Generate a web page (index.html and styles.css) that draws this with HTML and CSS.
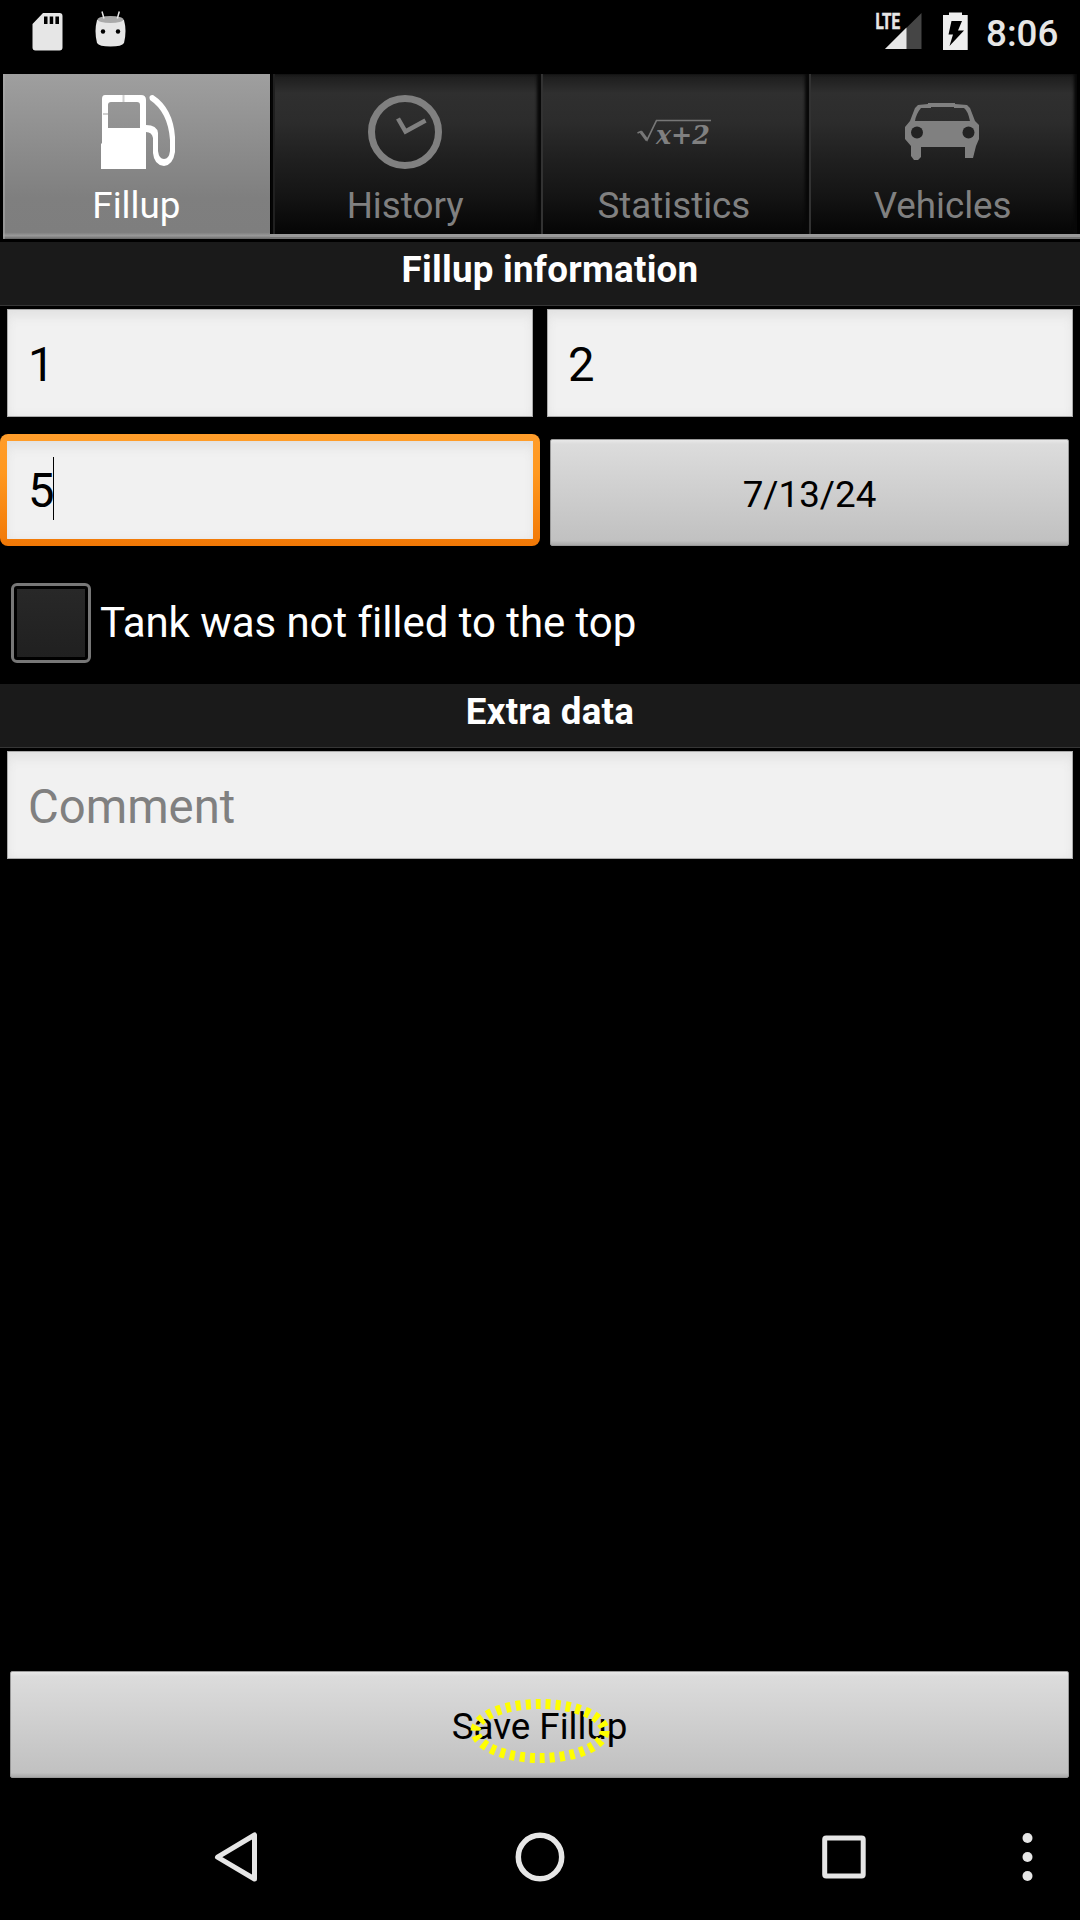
FILE: index.html
```html
<!DOCTYPE html>
<html lang="en">
<head>
<meta charset="utf-8">
<title>Fillup</title>
<link rel="stylesheet" href="styles.css">
</head>
<body>
<div class="screen">
  <header class="status">
    <svg class="status-left" width="140" height="74" viewBox="0 0 140 74">
      <path fill="#e6e6e6" fill-rule="evenodd" d="M43 13H59.500Q62.500 13 62.500 16V47.500Q62.500 50.500 59.500 50.500H35.500Q32.500 50.500 32.500 47.500V24ZM44 16.500V24H47.500V16.500ZM49.700 16.500V24H53.200V16.500ZM55.400 16.500V24H59V16.500Z"/>
      <path fill="#e6e6e6" d="M97 20Q110.500 15 124 20Q127 31 124 43Q122 46.500 110.500 46.500Q99 46.500 97 43Q94 31 97 20Z"/>
      <ellipse cx="110.500" cy="19.500" rx="13" ry="3.500" fill="#aaa"/>
      <path d="M102 11.500L104 18.500M119.300 11.500L117.300 18.500" stroke="#e6e6e6" stroke-width="1.500"/>
      <circle cx="103" cy="31.500" r="2.200"/><circle cx="118" cy="31.500" r="2.200"/>
    </svg>
    <div class="status-right">
      <svg width="100" height="74" viewBox="870 0 100 74">
        <path fill="#454545" d="M921.500 13V49H885Z"/>
        <path fill="#e6e6e6" d="M906.500 27.500V49H885Z"/>
        <text class="lte" x="875.500" y="29" textLength="24.500" lengthAdjust="spacingAndGlyphs">LTE</text>
        <path fill="#eee" d="M949 12.500H962V15H967.700V50H943V15H949Z"/>
        <path d="M951.500 21H962L958 30.500H964L949.500 46L953 34.500H948.500Z"/>
      </svg>
      <span class="clock">8:06</span>
    </div>
  </header>

  <nav class="tabs">
    <div class="tab active">
      <svg class="tab-icon" viewBox="0 0 84 84">
        <path fill="#fff" fill-rule="evenodd" d="M12 5H48Q53 5 53 10V35Q64 35 65 43V61Q66 69 71 69Q76 69 77 61V50Q75 22 57 10Q55 5 60 5Q80 18 82 47V62Q80 75 71 76Q61 75 60 63V48Q59 42 53 42V79H8V54L9 53V9Q9 5 12 5ZM18 12Q15 12 15 15V38H47V15Q47 12 44 12Z"/>
        <path d="M30.500 5V12M10 24H15" stroke="#d0d0d0" stroke-width="2"/>
      </svg>
      <span>Fillup</span>
    </div>
    <div class="tab">
      <svg class="tab-icon" viewBox="0 0 84 84" fill="none" stroke="#808080">
        <circle cx="42" cy="42" r="33.500" stroke-width="7"/>
        <path d="M35 28.500L42.500 41.500L62.500 30.500" stroke-width="4.500"/>
      </svg>
      <span>History</span>
    </div>
    <div class="tab">
      <svg class="tab-icon" viewBox="0 0 84 84">
        <path d="M5.500 43L9 41.500L15 50L24.500 30.500H79" fill="none" stroke="#777" stroke-width="1.700"/>
        <path d="M9 42L15 50" stroke="#777" stroke-width="3"/>
        <text class="formula" x="24" y="54" textLength="54" lengthAdjust="spacingAndGlyphs">x+2</text>
      </svg>
      <span>Statistics</span>
    </div>
    <div class="tab vehicles">
      <svg class="tab-icon" viewBox="0 0 84 84">
        <path fill="#808080" fill-rule="evenodd" d="M18 15L28 14V13H55V14L67 15L70 18L75 31L79 35V49L76 56L73 68H65V57H21V67L18 70H14L11 66V56L5 49V37L10 31L15 18ZM21 18Q16 24 15 31H70Q68 21 64 18H54V17H31V18Z"/>
        <circle cx="17" cy="42.500" r="6" fill="#222"/><circle cx="68.500" cy="42.500" r="6" fill="#222"/>
      </svg>
      <span>Vehicles</span>
    </div>
  </nav>
  <div class="tab-strip"></div>

  <main>
    <h2>Fillup information</h2>
    <div class="row">
      <div class="field">1</div>
      <div class="field">2</div>
    </div>
    <div class="row second">
      <div class="field focused">5<i class="caret"></i></div>
      <button class="date">7/13/24</button>
    </div>
    <div class="check-row">
      <span class="checkbox"><i></i></span>
      <span>Tank was not filled to the top</span>
    </div>
    <h2>Extra data</h2>
    <div class="row"><div class="field hint">Comment</div></div>
  </main>

  <footer>
    <button class="save">Save Fillup
      <svg class="touch" viewBox="0 0 144 72"><ellipse cx="72" cy="36" rx="64.500" ry="27" fill="none" stroke="#ff0" stroke-width="10" stroke-dasharray="5 5"/></svg>
    </button>
    <svg class="nav" viewBox="0 1778 1080 142" fill="none" stroke="#e6e6e6">
      <path d="M217.500 1857.200L254.500 1835V1879Z" stroke-width="5" stroke-linejoin="round"/>
      <circle cx="540" cy="1857" r="21.700" stroke-width="5.500"/>
      <rect x="824.700" y="1838" width="38.500" height="38" rx="1.500" stroke-width="5"/>
      <g fill="#e6e6e6" stroke="none"><circle cx="1027.500" cy="1838" r="5"/><circle cx="1027.500" cy="1857" r="5"/><circle cx="1027.500" cy="1876" r="5"/></g>
    </svg>
  </footer>
</div>
</body>
</html>
```
FILE: styles.css
```css
* { box-sizing: border-box; }

body {
  margin: 0;
  background: #000;
  color: #fff;
  font-family: Roboto, sans-serif;
}

.screen {
  width: 1080px;
  height: 1920px;
  display: flex;
  flex-direction: column;
  overflow: hidden;
}

svg { display: block; }

.status {
  height: 74px;
  flex: none;
  display: flex;
  justify-content: space-between;
}

.status-right {
  display: flex;
  padding-right: 20px;
  color: #e6e6e6;
}

.clock {
  width: 90px;
  padding-left: 16px;
  font-size: 36.75px;
  font-weight: 500;
  line-height: 67px;
}

.lte {
  font: 700 22px Roboto, sans-serif;
  fill: #e6e6e6;
  stroke: #e6e6e6;
  stroke-width: .6px;
}

.tabs {
  flex: none;
  height: 160px;
  padding: 0 3px 0 2px;
  display: grid;
  grid-template-columns: repeat(4, 1fr);
}

.tab {
  height: 160px;
  padding-top: 16px;
  display: flex;
  flex-direction: column;
  align-items: center;
  color: #808080;
  font-size: 36.75px;
  line-height: 43px;
  background: linear-gradient(#1b1b1b, #2f2f2f 12%, #2c2c2c 30%, #202020 52%, #151515 75%, #050505);
  box-shadow: inset 1px 0 #080808, inset 3px 0 #323232, inset -3px 0 3px #080808;
}

.tab.active {
  height: 165px;
  margin-left: 1px;
  margin-right: 1px;
  color: #fff;
  background: linear-gradient(#9f9f9f, #7f7f7f 75%, #7e7e7e 96%, #999 98%, #666);
  box-shadow: inset 2px 0 #aaa8;
}

.tab.active + .tab { box-shadow: inset 2px 0 #050505, inset 4px 0 #202020, inset -3px 0 3px #080808; }

.tab-icon {
  width: 84px;
  height: 84px;
}

.tab.active .tab-icon { margin-right: 3px; }
.vehicles .tab-icon { margin-right: 2px; }

.tab span { margin-top: 10px; }

.formula {
  font: italic 700 26px "DejaVu Serif", serif;
  fill: #808080;
}

.tab-strip {
  flex: none;
  height: 5px;
  margin: 0 0 3px 270px;
  background: linear-gradient(#999 60%, #777 60%);
}

main { flex: 1; }

h2 {
  height: 64px;
  margin: 0;
  padding-left: 20px;
  background: #1a1a1a;
  border-bottom: 1px solid #363636;
  font-size: 36.75px;
  font-weight: 700;
  letter-spacing: .25px;
  line-height: 55px;
  text-align: center;
}

.row {
  display: flex;
  gap: 14px;
  padding: 3px 7px 0;
}

.field {
  flex: 1;
  height: 108px;
  padding-left: 20px;
  border: 1px solid #aaa;
  background: #f1f1f1;
  box-shadow: inset 0 10px 12px -4px #e2e2e2, inset 0 0 8px #e5e5e5;
  color: #000;
  font-size: 47.25px;
  line-height: 111px;
}

.second {
  gap: 10px;
  padding: 17px 11px 0 0;
}

.focused {
  position: relative;
  flex: 0 0 540px;
  height: 112px;
  padding-left: 21px;
  border: 7px solid transparent;
  border-radius: 8px;
  background: linear-gradient(#f1f1f1, #f1f1f1) padding-box, linear-gradient(#ff9d2b, #ff981f 35%, #f17806) border-box;
  line-height: 101px;
}

.caret {
  position: absolute;
  left: 46px;
  top: 16px;
  width: 1px;
  height: 63px;
  background: #000;
}

button {
  border: 1px solid #999;
  border-radius: 2px;
  padding: 0;
  background: linear-gradient(#e8e8e8, #dcdcdc 4%, #c4c4c4 85%, #c1c1c1 96%, #aaa);
  color: #000;
  font: 36.75px Roboto, sans-serif;
}

.date {
  flex: 1;
  height: 107px;
  margin-top: 5px;
  padding-top: 3px;
}

.check-row {
  height: 138px;
  display: flex;
  align-items: center;
  gap: 9px;
  padding: 16px 0 0 11px;
  font-size: 42px;
}

.check-row > span:last-child {
  margin-top: -2px;
  letter-spacing: -.06px;
}

.checkbox {
  width: 80px;
  height: 80px;
  padding: 3px;
  border: 3px solid #777;
  border-radius: 6px;
}

.checkbox i {
  display: block;
  width: 68px;
  height: 68px;
  background: linear-gradient(#282828, #202020);
}

.hint { color: #808080; }

footer { flex: none; }

.save {
  position: relative;
  display: block;
  width: 1059px;
  height: 107px;
  margin: 0 10px;
  padding-top: 3px;
}

.touch {
  position: absolute;
  left: 457px;
  top: 23px;
  width: 144px;
  height: 72px;
}

.nav { width: 1080px; height: 142px; }
```
